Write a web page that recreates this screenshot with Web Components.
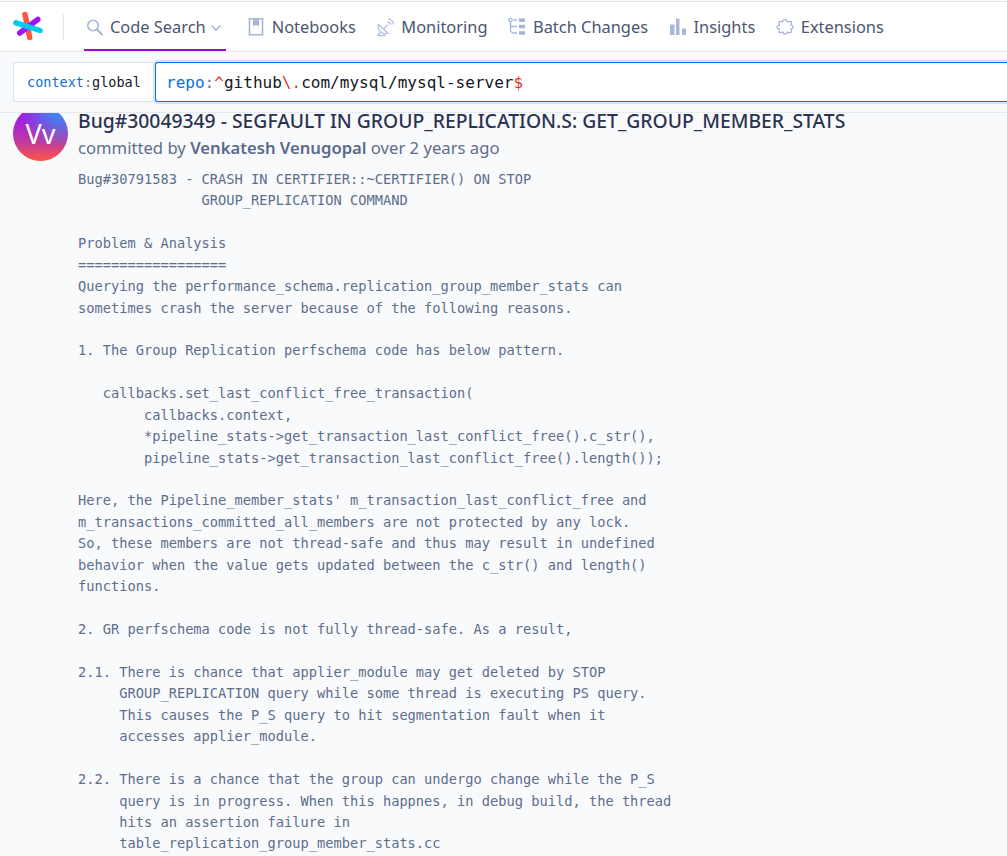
<!DOCTYPE html>
<html>
<head>
<meta charset="utf-8">
<title>Code Search</title>
<style>
  html, body { margin: 0; height: 856px; overflow: hidden; background: #f9fafc; }
  body { font-family: "Noto Sans", "Open Sans", sans-serif; }
</style>
</head>
<body>
<sg-nav>
  <sg-nav-item icon="search" active caret>Code Search</sg-nav-item>
  <sg-nav-item icon="book">Notebooks</sg-nav-item>
  <sg-nav-item icon="dish">Monitoring</sg-nav-item>
  <sg-nav-item icon="batch">Batch Changes</sg-nav-item>
  <sg-nav-item icon="bars">Insights</sg-nav-item>
  <sg-nav-item icon="puzzle">Extensions</sg-nav-item>
</sg-nav>
<sg-search></sg-search>
<sg-commit title-text="Bug#30049349 - SEGFAULT IN GROUP_REPLICATION.S: GET_GROUP_MEMBER_STATS" author="Venkatesh Venugopal" age="over 2 years ago">Bug#30791583 - CRASH IN CERTIFIER::~CERTIFIER() ON STOP
               GROUP_REPLICATION COMMAND

Problem &amp; Analysis
==================
Querying the performance_schema.replication_group_member_stats can
sometimes crash the server because of the following reasons.

1. The Group Replication perfschema code has below pattern.

   callbacks.set_last_conflict_free_transaction(
        callbacks.context,
        *pipeline_stats-&gt;get_transaction_last_conflict_free().c_str(),
        pipeline_stats-&gt;get_transaction_last_conflict_free().length());

Here, the Pipeline_member_stats' m_transaction_last_conflict_free and
m_transactions_committed_all_members are not protected by any lock.
So, these members are not thread-safe and thus may result in undefined
behavior when the value gets updated between the c_str() and length()
functions.

2. GR perfschema code is not fully thread-safe. As a result,

2.1. There is chance that applier_module may get deleted by STOP
     GROUP_REPLICATION query while some thread is executing PS query.
     This causes the P_S query to hit segmentation fault when it
     accesses applier_module.

2.2. There is a chance that the group can undergo change while the P_S
     query is in progress. When this happnes, in debug build, the thread
     hits an assertion failure in
     table_replication_group_member_stats.cc</sg-commit>

<script>
const NAV_ICONS = {
  search: '<circle cx="9" cy="8.500" r="5.200" fill="none" stroke="#a6b6d9" stroke-width="1.600"/><path d="M13 12.500l5 5" stroke="#a6b6d9" stroke-width="2" stroke-linecap="round"/>',
  book: '<path d="M3.500 1.800h13v16h-13z" fill="none" stroke="#a6b6d9" stroke-width="1.600"/><path d="M7 2h6v7.500l-3-1.800-3 1.800z" fill="#a6b6d9"/>',
  dish: '<path d="M3.500 7.500a7.500 7.500 0 0 0 9.500 9z" fill="none" stroke="#b4c2df" stroke-width="1.300"/><path d="M8.500 12l2.800-2.800M2.500 18.500l3-3.500M2.500 18.500h8" fill="none" stroke="#b4c2df" stroke-width="1.300"/><circle cx="12" cy="8.500" r="1" fill="#b4c2df"/><path d="M12.800 5a3 3 0 0 1 2.700 2.800M13 1.800a6.200 6.200 0 0 1 5.500 5.700" fill="none" stroke="#b4c2df" stroke-width="1.300"/>',
  batch: '<circle cx="3.500" cy="3" r="1.700" fill="none" stroke="#a6b6d9" stroke-width="1.200"/><path d="M3.500 5v7.500a3.500 3.500 0 0 0 3.500 3.500h3M3.500 9.500h6.500" fill="none" stroke="#a6b6d9" stroke-width="1.300"/><path d="M6.500 2.300h3.500v1.500H6.500zM12 1.500h6v3.500h-6zM12 7.700h6v3.500h-6zM12 14.300h6v3.500h-6z" fill="#a6b6d9"/>',
  bars: '<path d="M2 7.500h4.500v10.500H2zM8 1.500h3.500v16.500H8zM14 11.500h4v6.500h-4z" fill="#a9b9da"/>',
  puzzle: '<path transform="translate(1.500 1.200) scale(.85)" d="M7.500 4.200c-.4-3.400 5.400-3.400 5 0l3.800-.4c1 .1 1.300.6 1.200 1.500l-.4 2.900c2.800-.5 3.600 4.500 0 4.300l.4 3.100c0 1-.5 1.400-1.500 1.300l-3.200-.5c-.1 3-5.100 2.900-5.100 0l-3.500.5c-1 0-1.500-.4-1.400-1.400l.6-3.100c-3.700.4-3.300-4.800 0-4.300l-.6-3c0-.9.500-1.400 1.400-1.300z" fill="none" stroke="#a6b6d9" stroke-width="1.500" stroke-linejoin="round"/>'
};

class SgNav extends HTMLElement {
  constructor() {
    super();
    this.attachShadow({ mode: 'open' });
    this.shadowRoot.innerHTML = `
      <style>
        :host { display: flex; height: 49px; margin-top: 1px; border-top: 1px solid #e4e4e4; border-bottom: 1px solid #e6e9f0; background: #fff; align-items: stretch; }
        .logo { display: flex; align-items: center; width: 63px; padding-left: 13px; box-sizing: border-box; }
        .logo svg { display: block; }
        .sep { width: 1px; height: 25px; background: #e0e6f0; align-self: center; margin-right: 20px; }
        .items { display: flex; align-items: stretch; gap: 19.500px; }
      </style>
      <div class="logo">
        <svg width="31" height="31" viewBox="0 0 31 31">
          <path d="M12 3.500L16.700 26.500" stroke="#ff5543" stroke-width="5.500" stroke-linecap="round"/>
          <path d="M24.800 8.500L6.800 22" stroke="#a112ff" stroke-width="5.500" stroke-linecap="round"/>
          <path d="M3 11.800L27 19.500" stroke="#00cbec" stroke-width="5.500" stroke-linecap="round"/>
        </svg>
      </div>
      <div class="sep"></div>
      <div class="items"><slot></slot></div>`;
  }
}
customElements.define('sg-nav', SgNav);

class SgNavItem extends HTMLElement {
  constructor() {
    super();
    this.attachShadow({ mode: 'open' });
  }
  connectedCallback() {
    const icon = NAV_ICONS[this.getAttribute('icon')] || '';
    const caret = this.hasAttribute('caret')
      ? '<svg class="caret" width="12" height="8" viewBox="0 0 12 8"><path d="M1.500 1.500L6 6l4.500-4.500" fill="none" stroke="#a6b6d9" stroke-width="1.600"/></svg>'
      : '';
    this.shadowRoot.innerHTML = `
      <style>
        :host { display: flex; align-items: center; gap: 6px; height: 49px; box-sizing: border-box; position: relative; color: #4b5671; font-size: 16.400px; white-space: nowrap; }
        :host([active]) { padding-right: 4.500px; }
        svg { display: block; flex: none; }
        .bar { display: none; }
        :host([active]) .bar { display: block; position: absolute; left: 0; right: 0; bottom: 0; height: 2px; background: #a305e1; }
        .caret { margin-left: -2px; margin-top: 2px; }
      </style>
      <svg width="20" height="20" viewBox="0 0 20 20">${icon}</svg>
      <span><slot></slot></span>${caret}
      <div class="bar"></div>`;
  }
}
customElements.define('sg-nav-item', SgNavItem);

class SgSearch extends HTMLElement {
  constructor() {
    super();
    this.attachShadow({ mode: 'open' });
    this.shadowRoot.innerHTML = `
      <style>
        :host { display: flex; height: 61px; padding: 10px 0 0 13px; box-sizing: border-box; border-bottom: 1px solid #e6e9f0; background: #f9fafc; font-family: "DejaVu Sans Mono", monospace; position: relative; z-index: 2; }
        .ctx { width: 142px; height: 40px; box-sizing: border-box; border: 1px solid #dbe2f0; border-right: 0; border-radius: 3px 0 0 3px; background: #fff; display: flex; align-items: center; padding-left: 13px; font-size: 13.500px; color: #14171f; }
        .key { color: #0b70db; }
        .dim { color: #6b7793; }
        .box { flex: 1; height: 40px; box-sizing: border-box; border: 1px solid #0b70db; border-right: 0; border-radius: 3px 0 0 3px; background: #fff; box-shadow: 0 0 0 2px #cfe4f9; display: flex; align-items: center; padding-left: 10px; font-size: 16.050px; color: #14171f; white-space: pre; }
        .op { color: #d63a2f; }
      </style>
      <div class="ctx"><span class="key">context</span><span class="dim">:</span>global</div>
      <div class="box"><span class="key">repo</span><span class="dim">:</span><span class="op">^</span>github<span class="op">\\.</span>com/mysql/mysql-server<span class="op">$</span></div>`;
  }
}
customElements.define('sg-search', SgSearch);

class SgCommit extends HTMLElement {
  constructor() {
    super();
    this.attachShadow({ mode: 'open' });
  }
  connectedCallback() {
    this.shadowRoot.innerHTML = `
      <style>
        :host { display: flex; gap: 10px; padding-left: 13px; color: #14171f; }
        .avatar { flex: none; width: 55px; height: 55px; margin-top: -7px; border-radius: 50%; background: radial-gradient(circle at 85% 5%, #2a9df4 0%, rgba(42,157,244,0) 55%), linear-gradient(to bottom, #a31fe0 25%, #c03aa0 65%, #ff5543 100%); color: #fff; display: flex; align-items: center; justify-content: center; font-size: 27px; }
        .main { min-width: 0; flex: 1; }
        h1 { margin: -4px 0 0; font-size: 19.330px; font-weight: 500; line-height: 24px; color: #2b3350; white-space: nowrap; }
        .by { font-size: 16.650px; line-height: 27px; margin-top: 1px; color: #5e6e8c; white-space: nowrap; }
        .by b { font-weight: 600; color: #5a6a8a; }
        pre { margin: 7.900px 0 0; font-family: "DejaVu Sans Mono", monospace; font-size: 13.700px; line-height: 21.430px; color: #5e6e8c; }
      </style>
      <div class="avatar">Vv</div>
      <div class="main">
        <h1>${this.getAttribute('title-text')}</h1>
        <div class="by">committed by <b>${this.getAttribute('author')}</b> ${this.getAttribute('age')}</div>
        <pre><slot></slot></pre>
      </div>`;
  }
}
customElements.define('sg-commit', SgCommit);
</script>
</body>
</html>
